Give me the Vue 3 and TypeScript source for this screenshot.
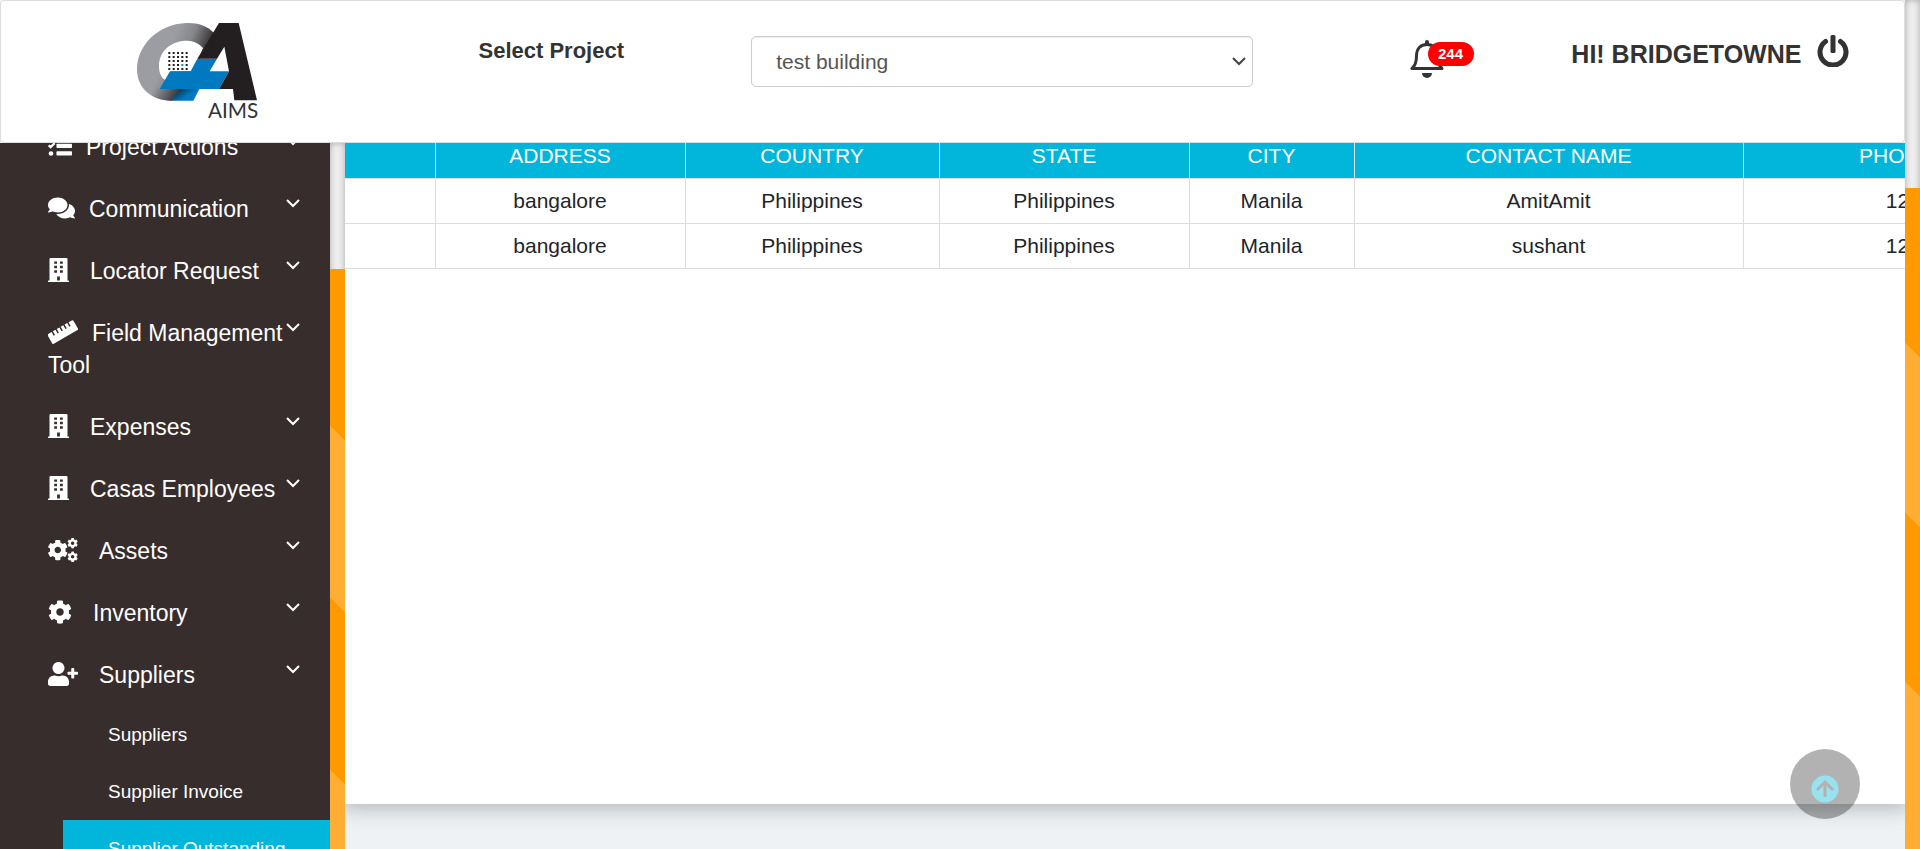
<script setup lang="ts">
import { ref } from 'vue'

type IconName = 'tasks' | 'comments' | 'building' | 'ruler' | 'cogs' | 'cog' | 'userplus'

interface NavItem {
  label: string
  icon: IconName
  wide?: boolean
  children?: { label: string; active?: boolean }[]
}

const navItems: NavItem[] = [
  { label: 'Project Actions', icon: 'tasks' },
  { label: 'Communication', icon: 'comments' },
  { label: 'Locator Request', icon: 'building', wide: true },
  { label: 'Field Management Tool', icon: 'ruler' },
  { label: 'Expenses', icon: 'building', wide: true },
  { label: 'Casas Employees', icon: 'building', wide: true },
  { label: 'Assets', icon: 'cogs', wide: true },
  { label: 'Inventory', icon: 'cog', wide: true },
  {
    label: 'Suppliers',
    icon: 'userplus',
    wide: true,
    children: [
      { label: 'Suppliers' },
      { label: 'Supplier Invoice' },
      { label: 'Supplier Outstanding', active: true },
    ],
  },
]

const iconWidth: Record<IconName, number> = {
  tasks: 512,
  comments: 576,
  building: 448,
  ruler: 640,
  cogs: 640,
  cog: 512,
  userplus: 640,
}

const cogPath =
  'M487.4 315.7l-42.6-24.6c4.3-23.2 4.3-47 0-70.2l42.6-24.6c4.9-2.8 7.1-8.6 5.5-14-11.1-35.6-30-67.8-54.7-94.6-3.8-4.1-10-5.1-14.8-2.3L380.8 110c-17.9-15.4-38.5-27.3-60.8-35.1V25.8c0-5.6-3.9-10.5-9.4-11.7-36.7-8.2-74.3-7.8-109.2 0-5.5 1.2-9.4 6.1-9.4 11.7V75c-22.2 7.9-42.8 19.8-60.8 35.1L88.7 85.5c-4.9-2.8-11-1.9-14.8 2.3-24.7 26.7-43.6 58.9-54.7 94.6-1.7 5.4.6 11.2 5.5 14L67.3 221c-4.3 23.2-4.3 47 0 70.2l-42.6 24.6c-4.9 2.8-7.1 8.6-5.5 14 11.1 35.6 30 67.8 54.7 94.6 3.8 4.1 10 5.1 14.8 2.3l42.6-24.6c17.9 15.4 38.5 27.3 60.8 35.1v49.2c0 5.6 3.9 10.5 9.4 11.7 36.7 8.2 74.3 7.8 109.2 0 5.5-1.2 9.4-6.1 9.4-11.7v-49.2c22.2-7.9 42.8-19.8 60.8-35.1l42.6 24.6c4.9 2.8 11 1.9 14.8-2.3 24.7-26.7 43.6-58.9 54.7-94.6 1.5-5.5-.7-11.3-5.6-14.1zM256 336c-44.1 0-80-35.9-80-80s35.9-80 80-80 80 35.9 80 80-35.9 80-80 80z'

const columns = ['', 'ADDRESS', 'COUNTRY', 'STATE', 'CITY', 'CONTACT NAME', 'PHONE NO']
const rows = [
  ['', 'bangalore', 'Philippines', 'Philippines', 'Manila', 'AmitAmit', '12345'],
  ['', 'bangalore', 'Philippines', 'Philippines', 'Manila', 'sushant', '12345'],
]

const project = ref('test building')
const dots = [0, 1, 2, 3, 4]
</script>

<template>
  <div class="page">
    <div class="main">
      <header class="topbar">
        <svg class="logo" viewBox="0 0 480 360" role="img" aria-label="CA AIMS">
          <defs>
            <linearGradient id="ring" gradientUnits="userSpaceOnUse" x1="170" y1="60" x2="275" y2="105">
              <stop offset="0" stop-color="#9c9da2" />
              <stop offset="0.45" stop-color="#85868a" />
              <stop offset="1" stop-color="#2b2729" />
            </linearGradient>
            <linearGradient id="ringEnd" gradientUnits="userSpaceOnUse" x1="110" y1="225" x2="170" y2="262">
              <stop offset="0" stop-color="#55565a" stop-opacity="0" />
              <stop offset="1" stop-color="#3a3a3d" />
            </linearGradient>
            <linearGradient id="fold" gradientUnits="userSpaceOnUse" x1="180" y1="236" x2="196" y2="262">
              <stop offset="0" stop-color="#12344d" />
              <stop offset="1" stop-color="#0079c1" />
            </linearGradient>
          </defs>
          <path fill="url(#ring)" d="M285 72C262 46 232 38 200 39C110 42 50 110 51 180C52 235 95 272 155 272L200 230L240 146Z" />
          <path fill="url(#ringEnd)" d="M95 215L119 237H180L155 272C120 271 92 262 72 240Z" />
          <path fill="#fff" d="M249 114C235 97 215 92 195 92C150 95 117 125 117 168C117 190 125 204 137 211L152 184H215L237 146Z" />
          <template v-for="r in dots" :key="r">
            <rect
              v-for="c in dots"
              :key="c"
              :x="145 + c * 13"
              :y="126 + r * 12"
              width="6"
              height="6"
              :fill="r === 3 && c === 3 ? '#0090d8' : '#231f20'"
            />
          </template>
          <path fill="#0079c1" d="M232 146H291L269 184H327L297 237H119L150 184H212Z" />
          <path fill="url(#fold)" d="M180 237H238L220 272H153Z" />
          <path fill="#231f20" d="M297 39H356L411 271H343L339 237H297L327 184L313 110L291 146H232Z" />
          <text x="264" y="324" class="logo-text">AIMS</text>
        </svg>

        <label class="select-label" for="project">Select Project</label>

        <div class="select-wrap">
          <select id="project" v-model="project">
            <option>test building</option>
          </select>
          <svg class="select-arrow" viewBox="0 0 14 10" aria-hidden="true">
            <path d="M1 2L7 8L13 2" fill="none" stroke="#444" stroke-width="2" />
          </svg>
        </div>

        <button class="bell" type="button" aria-label="Notifications">
          <svg viewBox="0 0 34 38" aria-hidden="true">
            <path
              d="M2 28.500H32C28 25 27.500 21 27.500 16C27.500 8 23 4.500 17 4.500S6.500 8 6.500 16C6.500 21 6 25 2 28.500Z"
              fill="none"
              stroke="#333"
              stroke-width="3"
              stroke-linejoin="round"
            />
            <path d="M17 4V2" stroke="#333" stroke-width="4" stroke-linecap="round" />
            <path d="M12 33H22A5 5 0 0 1 12 33Z" fill="#333" />
          </svg>
          <span class="badge">244</span>
        </button>

        <div class="user">
          <span>HI! BRIDGETOWNE</span>
          <button type="button" class="power" aria-label="Log out">
            <svg viewBox="0 0 32 32" aria-hidden="true">
              <path
                d="M8.500 6.500A13 13 0 1 0 23.500 6.500"
                fill="none"
                stroke="#333"
                stroke-width="5"
                stroke-linecap="round"
              />
              <rect x="13.500" y="0" width="5" height="18" rx="1.500" fill="#333" />
            </svg>
          </button>
        </div>
      </header>

      <div class="body">
        <aside class="sidebar">
          <nav>
            <ul class="menu">
              <li v-for="item in navItems" :key="item.label">
                <a href="#" class="menu-link">
                  <svg
                    class="menu-icon"
                    :class="[item.icon, { wide: item.wide }]"
                    :viewBox="`0 0 ${iconWidth[item.icon]} 512`"
                    aria-hidden="true"
                  >
                    <g v-if="item.icon === 'tasks'">
                      <path d="M14 90L56 130L140 45M14 240L56 280L140 195" fill="none" stroke="#fff" stroke-width="48" />
                      <circle cx="64" cy="416" r="50" />
                      <rect x="180" y="50" width="332" height="90" rx="16" />
                      <rect x="180" y="210" width="332" height="90" rx="16" />
                      <rect x="180" y="370" width="332" height="90" rx="16" />
                    </g>
                    <path
                      v-else-if="item.icon === 'comments'"
                      d="M416 192c0-88.4-93.1-160-208-160S0 103.6 0 192c0 34.3 14.1 65.9 38 92-13.4 30.2-35.5 54.2-35.8 54.5-2.2 2.3-2.8 5.7-1.5 8.7S4.8 352 8 352c36.6 0 66.9-12.3 88.7-25 32.2 15.7 70.3 25 111.3 25 114.9 0 208-71.6 208-160zm122 220c23.9-26 38-57.7 38-92 0-66.9-53.5-124.2-129.3-148.1.9 6.6 1.3 13.3 1.3 20.1 0 105.9-107.7 192-240 192-10.8 0-21.3-.8-31.7-1.9C207.8 439.6 281.8 480 368 480c41 0 79.1-9.2 111.3-25 21.8 12.7 52.1 25 88.7 25 3.2 0 6.1-1.9 7.3-4.8 1.3-2.9.7-6.3-1.5-8.7-.3-.3-22.4-24.2-35.8-54.5z"
                    />
                    <path
                      v-else-if="item.icon === 'building'"
                      fill-rule="evenodd"
                      d="M436 480h-20V24c0-13.300-10.700-24-24-24H56C42.700 0 32 10.700 32 24v456H12c-6.600 0-12 5.400-12 12v20h448v-20c0-6.600-5.400-12-12-12zM132 72h60v52h-60zM256 72h60v52h-60zM132 166h60v52h-60zM256 166h60v52h-60zM132 260h60v52h-60zM256 260h60v52h-60zM194 392h60v88h-60z"
                    />
                    <g v-else-if="item.icon === 'ruler'" transform="rotate(-30 320 256)">
                      <path
                        d="M24 136h84v92h32v-92h64v92h32v-92h64v92h32v-92h64v92h32v-92h64v92h32v-92h84q24 0 24 24v192q0 24-24 24H24q-24 0-24-24V160q0-24 24-24z"
                      />
                    </g>
                    <g v-else-if="item.icon === 'cogs'">
                      <path :d="cogPath" transform="translate(-14 34) scale(.87)" />
                      <path :d="cogPath" transform="translate(410 -4) scale(.45)" />
                      <path :d="cogPath" transform="translate(410 286) scale(.45)" />
                    </g>
                    <path v-else-if="item.icon === 'cog'" :d="cogPath" />
                    <path
                      v-else
                      d="M624 208h-64v-64c0-8.800-7.200-16-16-16h-32c-8.800 0-16 7.200-16 16v64h-64c-8.800 0-16 7.200-16 16v32c0 8.800 7.200 16 16 16h64v64c0 8.800 7.200 16 16 16h32c8.800 0 16-7.200 16-16v-64h64c8.800 0 16-7.200 16-16v-32c0-8.800-7.200-16-16-16zm-400 48c70.700 0 128-57.300 128-128S294.700 0 224 0 96 57.300 96 128s57.300 128 128 128zm89.600 32h-16.700c-22.200 10.200-46.900 16-72.900 16s-50.600-5.800-72.900-16h-16.700C60.200 288 0 348.200 0 422.400V464c0 26.500 21.500 48 48 48h352c26.500 0 48-21.500 48-48v-41.600c0-74.200-60.200-134.400-134.400-134.400z"
                    /></svg>{{ item.label }}
                  <svg class="chevron" viewBox="0 0 14 9" aria-hidden="true">
                    <path d="M1 1L7 7L13 1" fill="none" stroke="#fff" stroke-width="2" />
                  </svg>
                </a>
                <ul v-if="item.children" class="submenu">
                  <li v-for="child in item.children" :key="child.label">
                    <a href="#" :class="{ active: child.active }">{{ child.label }}</a>
                  </li>
                </ul>
              </li>
            </ul>
          </nav>
        </aside>
        <div class="rail side-rail"><div class="thumb"></div></div>

        <main class="content">
          <section class="panel">
            <table>
              <colgroup>
                <col v-for="(c, i) in columns" :key="i" :class="`col-${i}`" />
              </colgroup>
              <thead>
                <tr>
                  <th v-for="(c, i) in columns" :key="i" scope="col">{{ c }}</th>
                </tr>
              </thead>
              <tbody>
                <tr v-for="(row, r) in rows" :key="r">
                  <td v-for="(cell, i) in row" :key="i">{{ cell }}</td>
                </tr>
              </tbody>
            </table>
          </section>
        </main>
      </div>

      <button class="to-top" type="button" aria-label="Back to top">
        <svg viewBox="0 0 28 28" aria-hidden="true">
          <circle cx="14" cy="14" r="13.500" fill="#98e2f0" />
          <path d="M14 22V8M6 15L14 7L22 15" fill="none" stroke="#b2b2b2" stroke-width="3" />
        </svg>
      </button>
    </div>
    <div class="rail page-rail"><div class="thumb"></div></div>
  </div>
</template>

<style>
body {
  overflow: hidden;
}
</style>

<style scoped>
* {
  box-sizing: border-box;
}
.page {
  display: flex;
  height: 100vh;
  overflow: hidden;
  font-family: 'Liberation Sans', Arial, sans-serif;
  color: #212529;
  background: #eef2f4;
}
.main {
  flex: 1;
  min-width: 0;
  display: flex;
  flex-direction: column;
}
button {
  padding: 0;
  border: 0;
  background: none;
  font-family: inherit;
  cursor: pointer;
}
.topbar {
  display: grid;
  grid-template-columns: 478fr 273fr 502fr 157fr 162fr 333fr;
  align-items: start;
  height: 143px;
  flex: none;
  background: #fff;
  border: 1px solid #ddd;
  border-radius: 4px;
}
.logo {
  width: 160px;
  height: 120px;
  margin: 9px 0 0 119px;
}
.logo-text {
  font-family: Lato, sans-serif;
  font-size: 62px;
  fill: #333;
}
.select-label {
  margin-top: 37px;
  font-size: 22px;
  line-height: 26px;
  font-weight: 700;
  color: #333;
}
.select-wrap {
  position: relative;
  margin-top: 35px;
}
.select-wrap select {
  display: block;
  width: 100%;
  height: 51px;
  padding: 0 24px;
  appearance: none;
  border: 1px solid #ccc;
  border-radius: 5px;
  background: #fff;
  box-shadow: inset 0 1px 1px rgba(0, 0, 0, 0.08);
  font-family: inherit;
  font-size: 21px;
  color: #555;
}
.select-arrow {
  position: absolute;
  right: 7px;
  top: 20px;
  width: 14px;
  height: 10px;
  pointer-events: none;
}
.bell {
  position: relative;
  grid-column: 5;
  width: 34px;
  height: 38px;
  margin-top: 39px;
}
.bell svg {
  display: block;
  width: 34px;
  height: 38px;
}
.badge {
  position: absolute;
  left: 18px;
  top: 2px;
  width: 46px;
  border-radius: 12px;
  background: #f00;
  color: #fff;
  font-size: 15px;
  line-height: 24px;
  font-weight: 700;
  text-align: center;
}
.user {
  display: flex;
  gap: 16px;
  margin-top: 34px;
  font-size: 25px;
  line-height: 38px;
  font-weight: 700;
  color: #333;
  white-space: nowrap;
}
.power,
.power svg {
  display: block;
  width: 32px;
  height: 32px;
}
.body {
  flex: 1;
  min-height: 0;
  display: flex;
}
.sidebar {
  flex: none;
  width: 330px;
  overflow: hidden;
  background: #372d2c;
}
.menu,
.submenu {
  margin: 0;
  padding: 0;
  list-style: none;
}
.menu {
  margin-top: -27px;
}
.menu-link {
  position: relative;
  display: block;
  padding: 15px 42px 15px 48px;
  font-size: 23px;
  line-height: 32px;
  color: #fff;
  text-decoration: none;
}
.menu-icon {
  height: 24px;
  margin-right: 14px;
  vertical-align: -3px;
  fill: #fff;
}
.menu-icon.wide {
  margin-right: 21px;
}
.chevron {
  position: absolute;
  right: 30px;
  top: 21px;
  width: 14px;
  height: 9px;
}
.submenu a {
  display: block;
  margin-left: 63px;
  padding-left: 45px;
  font-size: 19px;
  line-height: 57px;
  color: #fff;
  text-decoration: none;
}
.submenu a.active {
  background: #02b5da;
}
.rail {
  flex: none;
  width: 15px;
  overflow: hidden;
  background: #eee;
  box-shadow: inset 0 0 6px rgba(0, 0, 0, 0.3);
}
.thumb {
  background-color: #f90;
  background-image: linear-gradient(
    45deg,
    rgba(255, 255, 255, 0.2) 25%,
    transparent 25%,
    transparent 50%,
    rgba(255, 255, 255, 0.2) 50%,
    rgba(255, 255, 255, 0.2) 75%,
    transparent 75%
  );
}
.side-rail .thumb {
  height: 673px;
  margin-top: 126px;
}
.page-rail .thumb {
  height: 663px;
  margin-top: 188px;
}
.content {
  flex: 1;
  min-width: 0;
  overflow: hidden;
  padding-bottom: 45px;
}
.panel {
  display: flow-root;
  height: 100%;
  background: #fff;
  box-shadow: 0 0 20px 4px rgba(0, 0, 0, 0.25);
}
table {
  width: 1742px;
  margin-top: -10px;
  border-collapse: collapse;
  table-layout: fixed;
}
.col-0 {
  width: 90px;
}
.col-1 {
  width: 250px;
}
.col-2 {
  width: 254px;
}
.col-3 {
  width: 250px;
}
.col-4 {
  width: 165px;
}
.col-5 {
  width: 389px;
}
.col-6 {
  width: 344px;
}
th,
td {
  height: 45px;
  padding: 0;
  border: 1px solid #ddd;
  border-left: 0;
  font-size: 21px;
  line-height: 30px;
  font-weight: 400;
  text-align: center;
}
th {
  background: #02b5da;
  color: #fff;
}
.to-top {
  position: fixed;
  right: 60px;
  bottom: 30px;
  width: 70px;
  height: 70px;
  padding-top: 12px;
  border-radius: 50%;
  background: rgba(0, 0, 0, 0.3);
}
.to-top svg {
  width: 28px;
  height: 28px;
}
</style>
